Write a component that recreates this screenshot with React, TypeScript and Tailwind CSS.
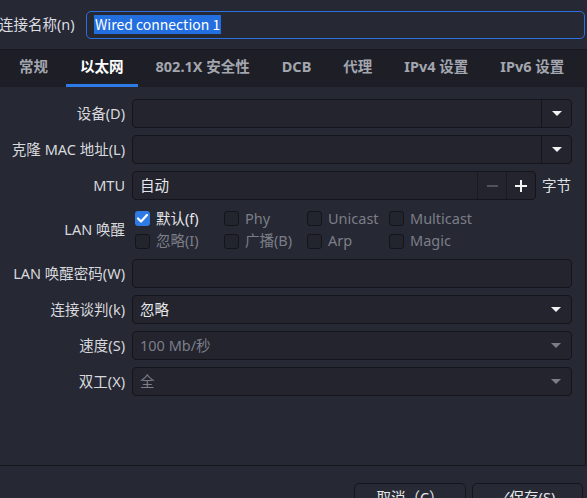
import React from "react";

const Arrow = ({ disabled }: { disabled?: boolean }) => (
  <svg width="10" height="5" viewBox="0 0 10 5">
    <path d="M0 0h10L5 5z" fill={disabled ? "#7b7d86" : "#f2f2f4"} />
  </svg>
);

function Check({ label, checked, enabled }: { label: string; checked?: boolean; enabled?: boolean }) {
  return (
    <div className="flex items-center gap-[6px]">
      {checked ? (
        <div className="w-[15px] h-[15px] rounded-[3px] bg-[#2f7be6] flex items-center justify-center">
          <svg width="11" height="9" viewBox="0 0 11 9">
            <path d="M1 4.5l3 3L10 1" stroke="#ffffff" strokeWidth="2.2" fill="none" strokeLinecap="round" strokeLinejoin="round" />
          </svg>
        </div>
      ) : (
        <div className="w-[15px] h-[15px] rounded-[3px] border border-[#14151b] bg-[#23252e]" />
      )}
      <span className={enabled ? "text-[#e6e7ea]" : "text-[#7b7e88]"}>{label}</span>
    </div>
  );
}

function Label({ children }: { children: React.ReactNode }) {
  return <div className="flex items-center justify-end text-[#d8d9de] whitespace-nowrap">{children}</div>;
}

function Field({ children, className = "" }: { children?: React.ReactNode; className?: string }) {
  return (
    <div className={"h-[29px] rounded-[4px] border border-[#14151b] bg-[#23242e] flex items-center overflow-hidden " + className}>
      {children}
    </div>
  );
}

export default function App() {
  const tabs = ["常规", "以太网", "802.1X 安全性", "DCB", "代理", "IPv4 设置", "IPv6 设置"];
  return (
    <div className="w-[587px] h-[498px] overflow-hidden bg-[#262833] text-[14.5px] text-[#e6e7ea] font-['Noto_Sans','Noto_Sans_CJK_SC',sans-serif] flex flex-col">
      {/* name row */}
      <div className="h-[49px] flex items-center shrink-0">
        <div className="-ml-[1px] w-[76px] text-[#dcdde2] whitespace-nowrap">连接名称(n)</div>
        <div className="ml-[11px] w-[499px] h-[28px] rounded-[5px] border-[1.5px] border-[#2c70e0] flex items-center pl-[7px] text-[14px] font-['Noto_Sans_CJK_SC',sans-serif]">
          <span className="bg-[#236fdf] text-white leading-[19px] h-[19px] px-[1px]">Wired connection 1</span>
        </div>
      </div>

      {/* tabs */}
      <div className="h-[38px] bg-[#1d1e26] flex items-stretch pl-[5px] gap-[4px] shrink-0 border-t border-[#191a21]">
        {tabs.map((t, i) => (
          <div
            key={t}
            className={
              "px-[14px] flex items-center font-bold whitespace-nowrap border-b-[3px] " +
              (i === 1 ? "text-white border-[#2f7be6]" : "text-[#a3a6af] border-transparent")
            }
          >
            {t}
          </div>
        ))}
      </div>

      {/* panel */}
      <div className="w-[586px] h-[379px] shrink-0 border-r border-b border-[#15161c] pt-[12px] pr-[13px]">
        <div className="grid grid-cols-[125px_1fr] gap-x-[7px] gap-y-[7px]">
          <Label>设备(D)</Label>
          <Field>
            <div className="flex-1" />
            <div className="w-[30px] h-full border-l border-[#14151b] flex items-center justify-center">
              <Arrow />
            </div>
          </Field>

          <Label>克隆 MAC 地址(L)</Label>
          <Field>
            <div className="flex-1" />
            <div className="w-[30px] h-full border-l border-[#14151b] flex items-center justify-center">
              <Arrow />
            </div>
          </Field>

          <Label>MTU</Label>
          <div className="flex items-center gap-[6px]">
            <Field className="w-[404px]">
              <div className="flex-1 pl-[7px]">自动</div>
              <div className="w-[29px] h-full border-l border-[#1a1b22] flex items-center justify-center">
                <div className="w-[11px] h-[2px] bg-[#4f525c]" />
              </div>
              <div className="w-[29px] h-full border-l border-[#1a1b22] flex items-center justify-center">
                <svg width="12" height="12" viewBox="0 0 12 12">
                  <path d="M6 0v12M0 6h12" stroke="#f2f2f4" strokeWidth="2" />
                </svg>
              </div>
            </Field>
            <span className="text-[#dfe0e4] whitespace-nowrap">字节</span>
          </div>

          <Label>LAN 唤醒</Label>
          <div className="h-[45px] pl-[3px] grid grid-cols-[89px_83px_82px_auto] grid-rows-[23px_22px] items-center">
            <Check label="默认(f)" checked enabled />
            <Check label="Phy" />
            <Check label="Unicast" />
            <Check label="Multicast" />
            <Check label="忽略(I)" />
            <Check label="广播(B)" />
            <Check label="Arp" />
            <Check label="Magic" />
          </div>

          <Label>LAN 唤醒密码(W)</Label>
          <Field />

          <Label>连接谈判(k)</Label>
          <Field>
            <div className="flex-1 pl-[7px]">忽略</div>
            <div className="w-[30px] h-full flex items-center justify-center">
              <Arrow />
            </div>
          </Field>

          <Label>速度(S)</Label>
          <Field>
            <div className="flex-1 pl-[7px] text-[#7b7e88]">100 Mb/秒</div>
            <div className="w-[30px] h-full flex items-center justify-center">
              <Arrow disabled />
            </div>
          </Field>

          <Label>双工(X)</Label>
          <Field>
            <div className="flex-1 pl-[7px] text-[#7b7e88]">全</div>
            <div className="w-[30px] h-full flex items-center justify-center">
              <Arrow disabled />
            </div>
          </Field>
        </div>
      </div>

      {/* buttons */}
      <div className="flex justify-end gap-[6px] pr-[4px] pt-[17px]">
        <div className="w-[112px] h-[30px] rounded-[5px] border border-[#15161c] bg-[#272a35] flex items-center justify-center text-[#e6e7ea]">
          取消（C）
        </div>
        <div className="w-[111px] h-[30px] rounded-[5px] border border-[#15161c] bg-[#272a35] flex items-center justify-center text-[#e6e7ea]">
          ✓保存(S)
        </div>
      </div>
    </div>
  );
}
